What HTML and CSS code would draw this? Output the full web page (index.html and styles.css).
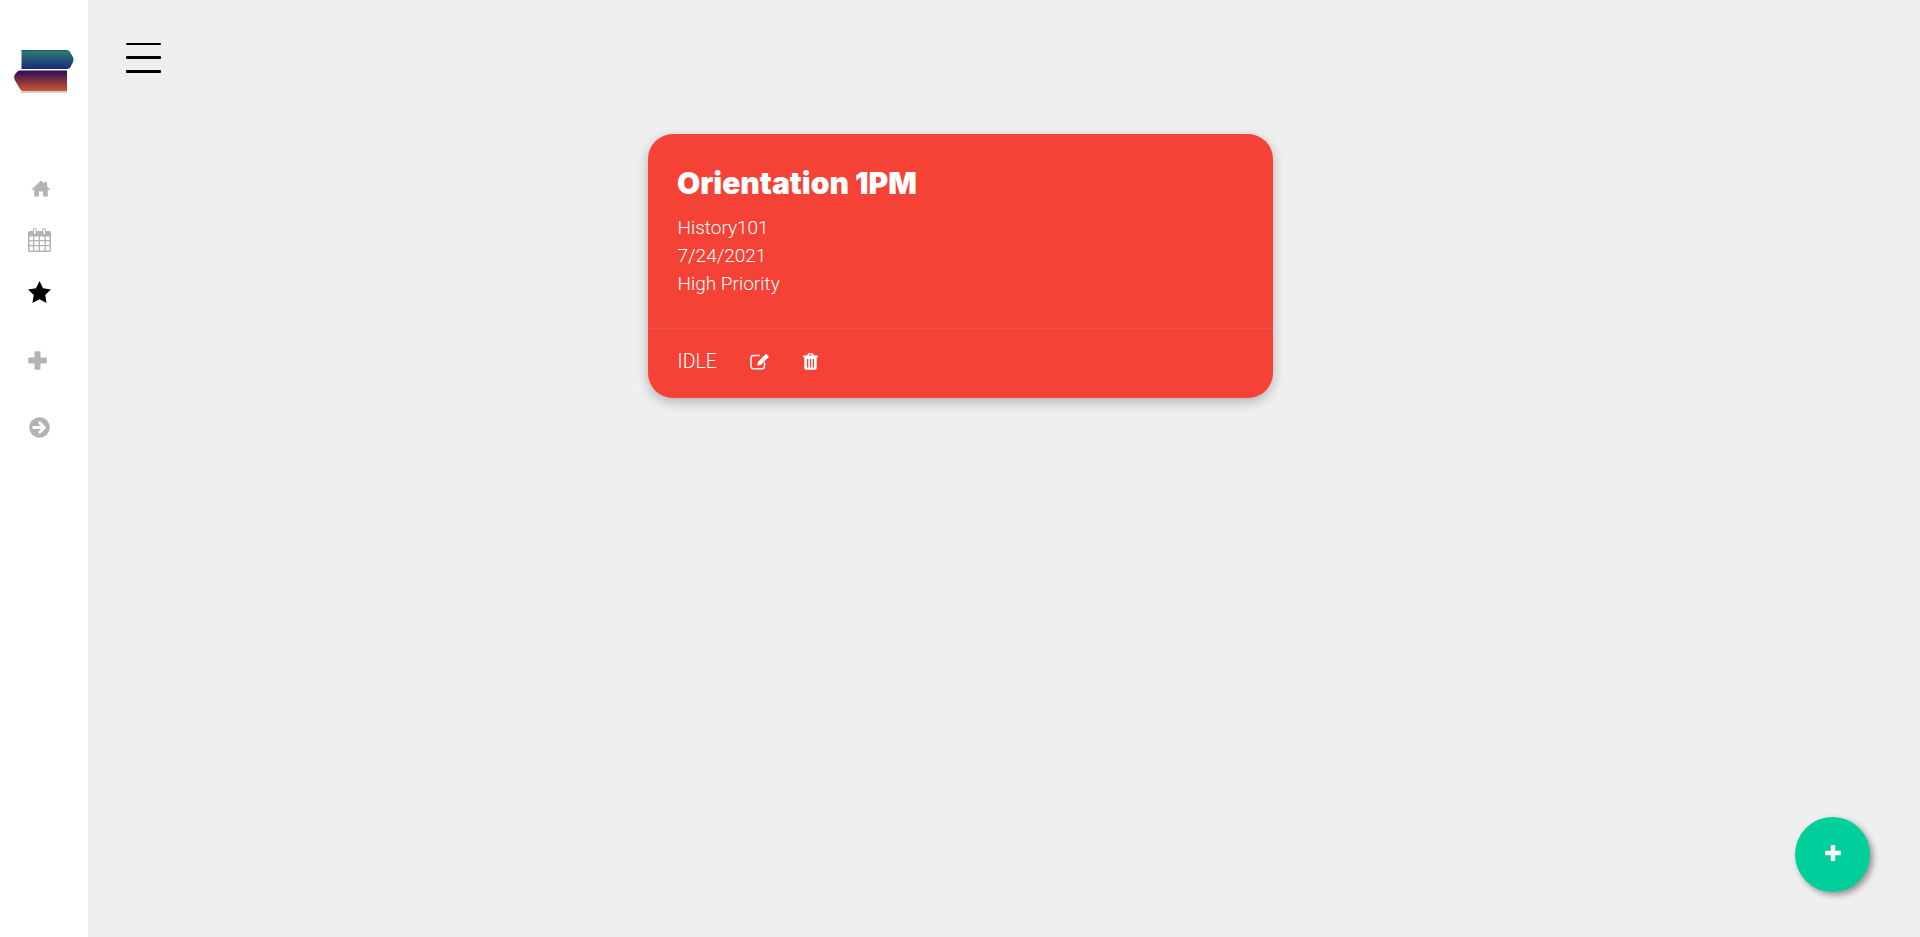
FILE: index.html
```html
<!DOCTYPE html>
<html lang="en">
<head>
    <meta charset="UTF-8">
    <meta name="viewport" content="width=device-width, initial-scale=1.0">
    <title>Tasks</title>
    <link rel="stylesheet" href="styles.css">
</head>
<body>
    <div class="sidebar">
        <div class="logo">
            <svg width="62" height="46" viewBox="0 0 62 46">
                <defs>
                    <linearGradient id="logoTop" x1="0" y1="0" x2="0" y2="1">
                        <stop offset="0" stop-color="#2a8078"/>
                        <stop offset="1" stop-color="#1b2a78"/>
                    </linearGradient>
                    <linearGradient id="logoBottom" x1="0" y1="0" x2="0" y2="1">
                        <stop offset="0" stop-color="#2a0a58"/>
                        <stop offset="1" stop-color="#d0552f"/>
                    </linearGradient>
                </defs>
                <path d="M8.500 0H54Q56 0 57 2L60 7Q61 9.500 60 12L57.500 17Q56.500 19 54 19H8.500Z" fill="url(#logoTop)"/>
                <path d="M8.500 .5H54" stroke="#1e5a5e" stroke-width="1"/>
                <path d="M7 20.500H54V41H10Q8 41 7 39L2 30.500Q.5 27.500 1.500 25L3.500 22.500Q5 20.500 7 20.500Z" fill="url(#logoBottom)"/>
                <rect x="8" y="41" width="46" height="2" fill="#c9d2d0"/>
            </svg>
        </div>
        <div class="nav">
            <a class="nav-item" href="#">
                <svg class="ico-home" viewBox="0 0 20 17"><path d="M10 .5L13.500 3.700V1.800H16V6.500L19.800 9.800H16.800V16.500H12V11.500H8V16.500H3.200V9.800H.2Z" fill="#b3b3b3"/></svg>
            </a>
            <a class="nav-item" href="#">
                <svg class="ico-cal" viewBox="0 0 23 24"><path fill-rule="evenodd" d="M2 3H5V1.500Q5 .2 6.300 .2H7.200Q8.500 .2 8.500 1.500V3H14.500V1.500Q14.500 .2 15.800 .2H16.700Q18 .2 18 1.500V3H21Q23 3 23 5V22Q23 24 21 24H2Q0 24 0 22V5Q0 3 2 3ZM6 1.200V6H7.500V1.200ZM15.500 1.200V6H17V1.200ZM1.500 8.500V12H5V8.500ZM6.300 8.500V12H10.700V8.500ZM12 8.500V12H16.500V8.500ZM17.800 8.500V12H21.500V8.500ZM1.500 13.200V17H5V13.200ZM6.300 13.200V17H10.700V13.200ZM12 13.200V17H16.500V13.200ZM17.800 13.200V17H21.500V13.200ZM1.500 18.200V22.500H5V18.200ZM6.300 18.200V22.500H10.700V18.200ZM12 18.200V22.500H16.500V18.200ZM17.800 18.200V22.500H21.500V18.200Z" fill="#b3b3b3"/></svg>
            </a>
            <a class="nav-item" href="#">
                <svg class="ico-star" viewBox="0 0 24 23"><path d="M12 0L15.700 7.600 24 8.800 18 14.700 19.400 23 12 19.100 4.600 23 6 14.700 0 8.800 8.300 7.600Z" fill="#000"/></svg>
            </a>
            <a class="nav-item nav-gap nav-gap-first" href="#">
                <svg class="ico-plus" viewBox="0 0 19 19"><path d="M6.500 1.300Q6.500 .2 7.600 .2H11.400Q12.500 .2 12.500 1.300V6.500H17.700Q18.800 6.500 18.800 7.600V11.400Q18.800 12.500 17.700 12.500H12.500V17.700Q12.500 18.800 11.400 18.800H7.600Q6.500 18.800 6.500 17.700V12.500H1.300Q.2 12.500 .2 11.400V7.600Q.2 6.500 1.300 6.500H6.500Z" fill="#b3b3b3"/></svg>
            </a>
            <a class="nav-item nav-gap" href="#">
                <svg class="ico-arrow" viewBox="0 0 21 21"><circle cx="10.500" cy="10.500" r="10.300" fill="#b3b3b3"/><path d="M4.500 10.500H15M10.700 5.700L15.500 10.500 10.700 15.300" fill="none" stroke="#fff" stroke-width="2.800" stroke-linecap="round" stroke-linejoin="round"/></svg>
            </a>
        </div>
    </div>

    <div class="main">
        <div class="menu-btn">
            <span class="bar bar-thin"></span>
            <span class="bar"></span>
            <span class="bar"></span>
        </div>

        <div class="card">
            <div class="card-body">
                <h2 class="card-title">Orientation 1PM</h2>
                <p class="card-text">History101</p>
                <p class="card-text">7/24/2021</p>
                <p class="card-text">High Priority</p>
            </div>
            <div class="card-footer">
                <span class="status">IDLE</span>
                <svg class="ico-edit" viewBox="0 0 20 17"><path d="M9.500 2.500H3.500Q1 2.500 1 5V13Q1 15.800 3.500 15.800H12Q14.500 15.800 14.500 13V10" fill="none" stroke="#fff" stroke-width="1.500" stroke-linecap="round"/><path d="M16 .8L19 3.800 11 11.800 7 12.800 8 8.800Z" fill="#fff"/></svg>
                <svg class="ico-trash" viewBox="0 0 15 17"><path fill-rule="evenodd" d="M5.200 .3H9.800L11 2.600H14.800V4.200H13.700V15Q13.700 16.800 12 16.800H3Q1.300 16.800 1.300 15V4.200H.2V2.600H4ZM6 1.500L5.500 2.600H9.500L9 1.500ZM4 6V14.500H5.300V6ZM6.900 6V14.500H8.100V6ZM9.700 6V14.500H11V6Z" fill="#fff"/></svg>
            </div>
        </div>
    </div>

    <a class="fab" href="#">
        <svg viewBox="0 0 16 16"><path d="M5.800 1Q5.800 0 6.800 0H9.200Q10.200 0 10.200 1V5.800H15Q16 5.800 16 6.800V9.200Q16 10.200 15 10.200H10.200V15Q10.200 16 9.200 16H6.800Q5.800 16 5.800 15V10.200H1Q0 10.200 0 9.200V6.800Q0 5.800 1 5.800H5.800Z" fill="#fff"/></svg>
    </a>
</body>
</html>
```

FILE: styles.css
```css
html, body{
    height: 100%;
}

body{
    margin: 0;
    padding: 0;
    display: flex;
    background-color: #efefef;
    font-family: Roboto, Arial, sans-serif;
    overflow: hidden;
}

.sidebar{
    width: 88px;
    flex-shrink: 0;
    background-color: white;
}

.logo{
    padding: 50px 0 0 13px;
    height: 112px;
}

.logo svg{
    display: block;
}

.nav{
    display: flex;
    flex-direction: column;
    padding-left: 28px;
}

.nav-item{
    height: 52px;
    display: flex;
    align-items: center;
}

.nav-gap{
    height: 67px;
}

.nav-gap-first{
    margin-top: 9px;
}

.nav-item svg{
    display: block;
}

.ico-home{
    width: 20px;
    height: 17px;
    margin-left: 3px;
}

.ico-cal{
    width: 23px;
    height: 24px;
}

.ico-star{
    width: 23px;
    height: 22px;
}

.ico-plus{
    width: 19px;
    height: 19px;
}

.ico-arrow{
    width: 21px;
    height: 21px;
    margin-left: 1px;
}

.main{
    flex: 1;
}

.menu-btn{
    display: flex;
    flex-direction: column;
    gap: 11px;
    width: 35px;
    padding: 43px 0 0 38px;
}

.bar{
    display: block;
    height: 3px;
    background-color: black;
    border-radius: 1px;
}

.bar-thin{
    height: 2px;
}

.card{
    width: 625px;
    margin: 61px 0 0 560px;
    background-color: #f44336;
    border-radius: 25px;
    color: white;
    box-shadow: 0 4px 12px rgba(0, 0, 0, 0.25);
}

.card-body{
    padding: 31px 30px 0 29px;
    height: 163px;
    border-bottom: 1px solid #e8574e;
}

.card-title{
    margin: 0 0 13px;
    font-family: Inter, Roboto, sans-serif;
    font-size: 30px;
    line-height: 36px;
    font-weight: 900;
}

.card-text{
    margin: 0;
    font-size: 19px;
    line-height: 28px;
    font-weight: 300;
    padding-left: 0.5px;
}

.card-footer{
    height: 65px;
    padding: 0 30px 4px 29.5px;
    display: flex;
    align-items: center;
}

.status{
    font-size: 19.5px;
    font-weight: 300;
    width: 72.5px;
}

.ico-edit{
    width: 20px;
    height: 17px;
    margin-right: 33px;
}

.ico-trash{
    width: 15px;
    height: 17px;
}

.fab{
    position: fixed;
    right: 50px;
    bottom: 45px;
    width: 75px;
    height: 75px;
    border-radius: 50%;
    background-color: #00cf9b;
    box-shadow: 3px 3px 6px rgba(0, 0, 0, 0.4);
    display: flex;
    align-items: center;
    justify-content: center;
}

.fab svg{
    width: 16px;
    height: 16px;
    margin-top: -3px;
}
```
